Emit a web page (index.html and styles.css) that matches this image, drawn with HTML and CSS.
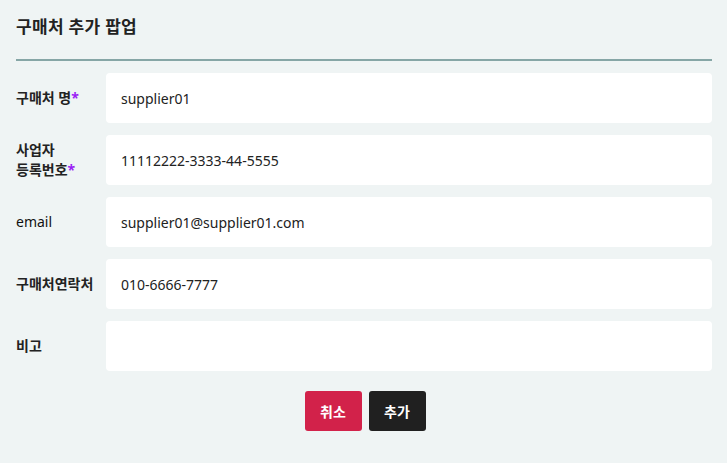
FILE: index.html
```html
<!DOCTYPE html>
<html lang="ko">
<head>
<meta charset="utf-8">
<link rel="stylesheet" href="styles.css">
</head>
<body>
<div class="popup">
  <div class="header"><h1 class="title">구매처 추가 팝업</h1></div>
  <div class="form">
    <div class="row">
      <div class="label">구매처 명<span class="req">*</span></div>
      <div class="field">supplier01</div>
    </div>
    <div class="row">
      <div class="label">사업자<br>등록번호<span class="req">*</span></div>
      <div class="field">11112222-3333-44-5555</div>
    </div>
    <div class="row">
      <div class="label label-latin">email</div>
      <div class="field">supplier01@supplier01.com</div>
    </div>
    <div class="row">
      <div class="label">구매처연락처</div>
      <div class="field">010-6666-7777</div>
    </div>
    <div class="row">
      <div class="label">비고</div>
      <div class="field"></div>
    </div>
  </div>
  <div class="actions">
    <button class="btn btn-cancel">취소</button>
    <button class="btn btn-add">추가</button>
  </div>
</div>
</body>
</html>
```
FILE: styles.css
```css
html, body {
  margin: 0;
  padding: 0;
  background: #eff4f4;
  font-family: "Noto Sans", "Noto Sans CJK KR", sans-serif;
  color: #222;
}
.popup {
  padding: 0 15px 0 16px;
}
.header {
  padding: 16px 0 21px;
  border-bottom: 2px solid #86a6a6;
}
.title {
  margin: 0;
  font-size: 17px;
  line-height: 22px;
  font-weight: 700;
  letter-spacing: 0.3px;
  color: #222;
}
.form {
  display: flex;
  flex-direction: column;
  gap: 12px;
  margin-top: 12px;
}
.row {
  display: flex;
  align-items: center;
  height: 50px;
}
.label {
  width: 90px;
  flex: none;
  font-size: 14px;
  line-height: 20px;
  font-weight: 700;
  color: #222;
}
.label-latin {
  font-weight: 400;
  color: #111;
}
.req {
  color: #9b1ff5;
}
.field {
  flex: 1;
  height: 50px;
  background: #fff;
  border-radius: 4px;
  display: flex;
  align-items: center;
  padding: 0 15px;
  font-size: 14px;
  color: #222;
}
.actions {
  display: flex;
  justify-content: center;
  gap: 7px;
  margin: 20px 0 0 2px;
}
.btn {
  width: 57px;
  height: 40px;
  border: none;
  border-radius: 3px;
  font-family: "Noto Sans", "Noto Sans CJK KR", sans-serif;
  font-size: 14px;
  font-weight: 700;
  color: #fff;
  padding: 0;
}
.btn-cancel { background: #d2224a; }
.btn-add { background: #202020; }
```
